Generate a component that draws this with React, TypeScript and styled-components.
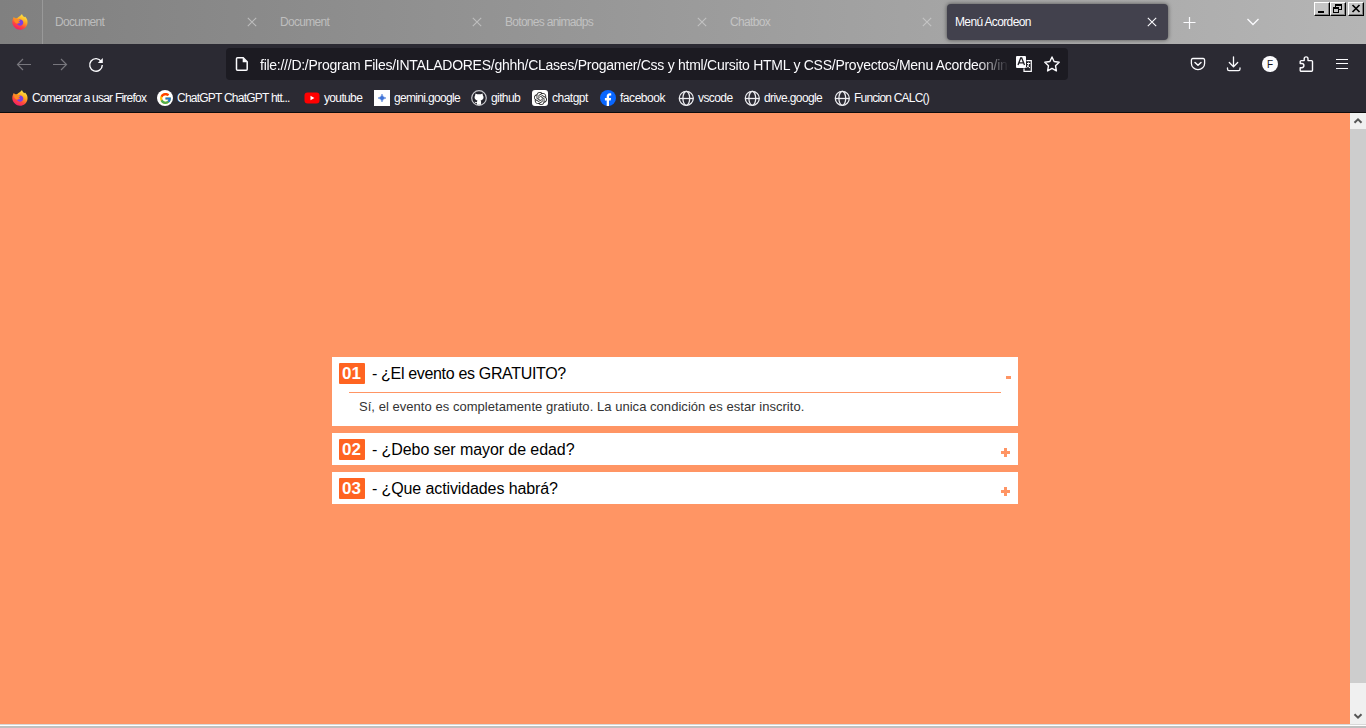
import React from "react";
import styled, { createGlobalStyle } from "styled-components";
import { SiOpenai } from "react-icons/si";
import { FcGoogle } from "react-icons/fc";
import { FaGithub } from "react-icons/fa";

const GlobalStyle = createGlobalStyle`
  * { box-sizing: border-box; }
  body { margin: 0; overflow: hidden; font-family: "Liberation Sans", Arial, sans-serif; }
`;

const Window = styled.div`
  display: flex;
  flex-direction: column;
  width: 1366px;
  height: 728px;
  background: #c0c0c0;
`;

const TitleBar = styled.div`
  position: relative;
  display: flex;
  height: 44px;
  background: linear-gradient(90deg, #808080, #b5b5b5);
`;

const HomeSlot = styled.div`
  width: 43px;
  height: 44px;
  padding: 14px 0 0 12px;
  border-right: 1px solid #999;
`;

const Tabs = styled.div`
  display: flex;
  padding: 4px 0 4px 4px;
`;

const Tab = styled.div<{ $active?: boolean; $color?: string }>`
  display: flex;
  align-items: center;
  justify-content: space-between;
  width: 221px;
  height: 36px;
  margin-right: 4px;
  padding: 0 11px 0 8px;
  border-radius: 4px;
  color: ${(p) => p.$color ?? "#fbfbfe"};
  background: ${(p) => (p.$active ? "#42414d" : "transparent")};
  box-shadow: ${(p) => (p.$active ? "0 0 4px rgba(0,0,0,.55)" : "none")};
`;

const Label = styled.span<{ $spacing: number }>`
  font-size: 12px;
  line-height: 16px;
  letter-spacing: ${(p) => p.$spacing}px;
  white-space: nowrap;
`;

const TabActions = styled.div`
  display: flex;
  gap: 48px;
  padding: 14px 0 0 9px;
`;

const WindowButtons = styled.div`
  position: absolute;
  top: 2px;
  right: 2px;
  display: flex;
`;

const WindowButton = styled.div<{ $gap?: boolean }>`
  width: 16px;
  height: 14px;
  margin-left: ${(p) => (p.$gap ? 2 : 0)}px;
  background: #c6c6c6;
  border: 1px solid;
  border-color: #fff #000 #000 #fff;
  box-shadow: inset -1px -1px #808080;
  svg { display: block; }
`;

const NavBar = styled.div`
  display: flex;
  height: 41px;
  padding-top: 4px;
  background: #2b2a33;
`;

const NavGroup = styled.div`
  display: flex;
  gap: 20px;
  width: 226px;
  padding: 9px 0 0 16px;
`;

const UrlBar = styled.div`
  display: flex;
  align-items: center;
  width: 842px;
  height: 32px;
  padding: 0 8px;
  border-radius: 4px;
  background: #1c1b22;
`;

const UrlText = styled.div`
  width: 749px;
  margin: 1px 7px 0 10px;
  overflow: hidden;
  color: #fbfbfe;
  font-size: 14px;
  line-height: 20px;
  letter-spacing: -0.26px;
  white-space: nowrap;
  mask-image: linear-gradient(to left, transparent, #000 32px);
`;

const UrlIcons = styled.div`
  display: flex;
  gap: 12px;
`;

const ToolGroup = styled.div`
  display: flex;
  gap: 20px;
  padding: 8px 0 0 122px;
`;

const Bookmarks = styled.div`
  display: flex;
  height: 28px;
  padding: 5px 0 0 12px;
  background: #2b2a33;
  border-bottom: 1px solid #0c0c0d;
`;

const Bookmark = styled.div<{ $width: number }>`
  display: flex;
  gap: 4px;
  width: ${(p) => p.$width}px;
  color: #fbfbfe;
`;

const Icon = styled.svg`
  display: block;
  flex: none;
`;

const Chip = styled.span<{ $radius: string; $dark?: boolean }>`
  display: flex;
  flex: none;
  align-items: center;
  justify-content: center;
  width: 16px;
  height: 16px;
  border-radius: ${(p) => p.$radius};
  border: ${(p) => (p.$dark ? "1px solid #c9c9cd" : "none")};
  background: ${(p) => (p.$dark ? "#fff" : "#fff")};
  color: #222;
`;

const Viewport = styled.div`
  display: flex;
  height: 611px;
`;

const Page = styled.main`
  flex: 1;
  padding: 244px 332px 0;
  background: #ff9564;
`;

const Scrollbar = styled.div`
  display: flex;
  flex-direction: column;
  justify-content: space-between;
  width: 16px;
  background: #f0f0f0;
`;

const Thumb = styled.div`
  height: 554px;
  margin-bottom: 25px;
  background: #cdcdcd;
`;

const BottomEdge = styled.div`
  height: 2px;
  background: #fff;
  border-top: 1px solid #d8d8d8;
`;

const Accordion = styled.div`
  display: flex;
  flex-direction: column;
  gap: 7px;
  width: 686px;
`;

const Item = styled.section`
  background: #fff;
`;

const ItemHeader = styled.div<{ $open?: boolean }>`
  display: flex;
  height: 32px;
  padding: 6px ${(p) => (p.$open ? 7 : 8)}px 0 7px;
`;

const Badge = styled.span`
  width: 26px;
  height: 21px;
  margin-right: 7px;
  padding-left: 3px;
  border-radius: 1px;
  background: #ff6421;
  color: #fff;
  font-size: 17px;
  font-weight: bold;
  line-height: 21px;
`;

const Question = styled.span<{ $spacing: number }>`
  flex: 1;
  color: #000;
  font-size: 16px;
  line-height: 21px;
  letter-spacing: ${(p) => p.$spacing}px;
`;

const Answer = styled.p`
  height: 34px;
  margin: 3px 17px 0;
  padding: 5px 10px 0;
  border-top: 1px solid #ff9564;
  color: #333;
  font-size: 13px;
  line-height: 18px;
  letter-spacing: 0.04px;
`;

const Sign = styled.svg`
  display: block;
  margin-top: 9px;
`;

const Firefox = () => (
  <Icon width="16" height="16" viewBox="0 0 16 16">
    <defs>
      <linearGradient id="flame" x1="0.8" y1="0" x2="0.3" y2="1">
        <stop offset="0" stopColor="#fff44f" />
        <stop offset="0.4" stopColor="#ffab1f" />
        <stop offset="0.7" stopColor="#ff4a3d" />
        <stop offset="1" stopColor="#f5156c" />
      </linearGradient>
    </defs>
    <path d="M1.8 3.1 3 4.300 5 4.200C7 2.400 8.500 2 10 0c.3 1.500 1.200 2.300 2.300 3.200L13 2.500c2 1.800 2.800 4 2.500 6.500C15 13 11.800 15.800 8 15.800S.6 12.600.3 8.600C.2 6.500.9 4.800 1.800 3.100Z" fill="url(#flame)" />
    <path d="M5 7.200C6 5.500 8 5.200 9.500 5.800c1.500.8 2 2.200 1.700 3.500-.4 1.500-1.600 2.400-3.100 2.400S5 10.700 4.900 9.300l2 .2 1.300-1.200z" fill="#7b3fe4" />
    <path d="M2 5.200c1.700-.7 3.400-.5 4.700.6l1.500.7-1.900 1.500-.8 1.700c-2.200-.5-3.500-2-3.500-4.500Z" fill="#ff8a22" />
  </Icon>
);

const Close = ({ color = "#fbfbfe" }: { color?: string }) => (
  <Icon width="10" height="10" viewBox="0 0 10 10" stroke={color} strokeWidth="1.1">
    <path d="M.8.800 9.200 9.200M9.200.800.8 9.200" />
  </Icon>
);

const Globe = () => (
  <Icon width="16" height="16" viewBox="0 0 16 16" fill="none" stroke="#ececf0" strokeWidth="1.300">
    <circle cx="8.300" cy="8.300" r="7" />
    <ellipse cx="8.300" cy="8.300" rx="3.400" ry="7" />
    <path d="M1.300 8.500h14" />
  </Icon>
);

const GitHub = () => (
  <Icon width="16" height="16" viewBox="0 0 16 16">
    <circle cx="8" cy="8" r="7.300" fill="#25242c" stroke="#c8c8cc" strokeWidth="1.200" />
    <path d="M4.500 3.500 6.300 4.300h3.400l1.800-.8.4 2c.7 1 .8 2.200.3 3.300-.4.9-1.300 1.400-2.600 1.600.4.400.5.900.5 1.500v2.800H6v-1.600c-1.200.3-1.900-.2-2.500-1.300.9-.1 1.500.7 2.500.5 0-.8.100-1.400.5-1.900-1.300-.2-2.200-.7-2.600-1.600-.5-1.100-.4-2.300.2-3.300z" fill="#fff" />
  </Icon>
);

const YouTube = () => (
  <Icon width="16" height="16" viewBox="0 0 16 16">
    <rect x="0.500" y="2.500" width="15" height="11" rx="3" fill="#f00" />
    <path d="M6.500 5.800v4.400L10.400 8z" fill="#fff" />
  </Icon>
);

const Gemini = () => (
  <Chip $radius="0">
    <Icon width="8" height="8" viewBox="0 0 8 8">
      <path d="M4 0Q4.500 3.500 8 4 4.500 4.500 4 8 3.500 4.500 0 4 3.500 3.500 4 0Z" fill="#3f73d8" stroke="#5b88dc" strokeWidth=".6" />
    </Icon>
  </Chip>
);

const Facebook = () => (
  <Icon width="16" height="16" viewBox="0 0 16 16">
    <circle cx="8" cy="8" r="8" fill="#0866ff" />
    <path d="M6.700 16v-5.500H4.900V8h1.800V6.700c0-2.300 1.100-3.500 3.100-3.500.5 0 1 .1 1.400.2v2.200h-1c-.9 0-1.200.5-1.200 1.300V8h2.100l-.4 2.500H9V16z" fill="#fff" />
  </Icon>
);

const bookmarks = [
  { name: "Comenzar a usar Firefox", icon: <Firefox />, width: 145, spacing: -0.78 },
  { name: "ChatGPT ChatGPT htt...", icon: <Chip $radius="50%"><FcGoogle size={13} /></Chip>, width: 147, spacing: -0.77 },
  { name: "youtube", icon: <YouTube />, width: 70, spacing: -0.65 },
  { name: "gemini.google", icon: <Gemini />, width: 97, spacing: -0.67 },
  { name: "github", icon: <GitHub />, width: 61, spacing: -0.6 },
  { name: "chatgpt", icon: <Chip $radius="3px"><SiOpenai size={13} /></Chip>, width: 68, spacing: -0.5 },
  { name: "facebook", icon: <Facebook />, width: 78, spacing: -0.46 },
  { name: "vscode", icon: <Globe />, width: 66, spacing: -0.58 },
  { name: "drive.google", icon: <Globe />, width: 90, spacing: -0.6 },
  { name: "Funcion CALC()", icon: <Globe />, width: 100, spacing: -0.79 },
];

const tabs = [
  { name: "Document", spacing: -0.7, color: "#bcbcbc" },
  { name: "Document", spacing: -0.7, color: "#bebebe" },
  { name: "Botones animadps", spacing: -0.71, color: "#c1c1c1" },
  { name: "Chatbox", spacing: -0.67, color: "#c4c4c4" },
];

const Plus = () => (
  <Sign width="9" height="9" viewBox="0 0 9 9" fill="#ff9564">
    <path d="M3 0h3v3h3v3H6v3H3V6H0V3h3z" />
  </Sign>
);

const Minus = () => (
  <Sign width="5" height="9" viewBox="0 0 5 9" fill="#ff9564">
    <path d="M0 4h5v3H0z" />
  </Sign>
);

export default function App() {
  return (
    <Window>
      <GlobalStyle />
      <TitleBar>
        <HomeSlot><Firefox /></HomeSlot>
        <Tabs>
          {tabs.map((t, i) => (
            <Tab key={i} $color={t.color}>
              <Label $spacing={t.spacing}>{t.name}</Label>
              <Close color={t.color} />
            </Tab>
          ))}
          <Tab $active>
            <Label $spacing={-0.64}>Menú Acordeon</Label>
            <Close />
          </Tab>
        </Tabs>
        <TabActions>
          <Icon width="16" height="16" viewBox="0 0 16 16" stroke="#fbfbfe" strokeWidth="1.200"><path d="M8.500 3v12M2.500 8.500h12" /></Icon>
          <Icon width="16" height="16" viewBox="0 0 16 16" fill="none" stroke="#fbfbfe" strokeWidth="1.300"><path d="m2.500 5 5.500 5.500L13.500 5" /></Icon>
        </TabActions>
        <WindowButtons>
          <WindowButton><svg width="14" height="12"><path d="M3 8h6v2H3z" /></svg></WindowButton>
          <WindowButton>
            <svg width="14" height="12" fill="none" stroke="#000" shapeRendering="crispEdges">
              <path d="M4.500 4V1.500h6v5H8M4 2h7" /><path d="M2.500 4.500h5v5h-5zM2 5h6" />
            </svg>
          </WindowButton>
          <WindowButton $gap><svg width="14" height="12" stroke="#000" strokeWidth="1.700"><path d="m3.500 2 7 7m0-7-7 7" /></svg></WindowButton>
        </WindowButtons>
      </TitleBar>

      <NavBar>
        <NavGroup>
          <Icon width="16" height="16" viewBox="0 0 16 16" fill="none" stroke="#77767d" strokeWidth="1.200"><path d="M15 7.500H1.500M7 2 1.500 7.500 7 13" /></Icon>
          <Icon width="16" height="16" viewBox="0 0 16 16" fill="none" stroke="#77767d" strokeWidth="1.200"><path d="M1 7.500h13.500M9 2l5.500 5.500L9 13" /></Icon>
          <Icon width="16" height="16" viewBox="0 0 16 16" fill="none" stroke="#fbfbfe" strokeWidth="1.400"><path d="M13.300 4.500A6.300 6.300 0 1 0 14.300 8" /><path d="M14.800 1v5H9.800z" fill="#fbfbfe" stroke="none" /></Icon>
        </NavGroup>
        <UrlBar>
          <Icon width="16" height="16" viewBox="0 0 16 16" fill="none" stroke="#fbfbfe" strokeWidth="1.500"><path d="M3.500 1.800h5.700l4 4v7.400a1 1 0 0 1-1 1H3.500a1 1 0 0 1-1-1V2.800a1 1 0 0 1 1-1Z" /><path d="M8.700 1.500v4.800h4.800" fill="#fbfbfe" stroke="none" /></Icon>
          <UrlText>file:///D:/Program Files/INTALADORES/ghhh/CLases/Progamer/Css y html/Cursito HTML y CSS/Proyectos/Menu Acordeon/ind</UrlText>
          <UrlIcons>
            <Icon width="16" height="16" viewBox="0 0 16 16">
              <rect width="10" height="12" rx="1" fill="#fbfbfe" />
              <path d="m2 9 2.700-7h1L8.500 9M3 6.800h4.500" fill="none" stroke="#1c1b22" strokeWidth="1.300" />
              <path d="M10.500 4.700h4.800v10.600H8V12.500" fill="none" stroke="#fbfbfe" strokeWidth="1.200" />
              <path d="M11 7.500h3.200M12.500 6.500v1.300c0 1.500-.8 3-2 4M11 9.500l3 2.500" fill="none" stroke="#fbfbfe" strokeWidth="1" />
            </Icon>
            <Icon width="16" height="16" viewBox="0 0 16 16" fill="none" stroke="#fbfbfe" strokeWidth="1.400" strokeLinejoin="round"><path d="m8 1 2.100 4.500 5.100.7-3.700 3.500.9 5.200L8 12.400l-4.400 2.500.9-5.200L.8 6.200l5.100-.7z" /></Icon>
          </UrlIcons>
        </UrlBar>
        <ToolGroup>
          <Icon width="16" height="16" viewBox="0 0 16 16" fill="none" stroke="#fbfbfe" strokeWidth="1.300" strokeLinecap="round" strokeLinejoin="round"><path d="M2.700 2.500h10.600a1.500 1.500 0 0 1 1.300 1.500v3.500a6.600 6.100 0 0 1-13.200 0V4a1.500 1.500 0 0 1 1.300-1.500Z" /><path d="M5 6.500 8 9.300l3-2.800" strokeWidth="1.500" /></Icon>
          <Icon width="16" height="16" viewBox="0 0 16 16" fill="none" stroke="#fbfbfe" strokeWidth="1.300" strokeLinecap="round" strokeLinejoin="round"><path d="M7.500.800v9.700M3.300 6.500l4.200 4.200 4.200-4.200M1.500 12v1a1.600 1.600 0 0 0 1.600 1.600h9.300a1.600 1.600 0 0 0 1.600-1.600v-1" /></Icon>
          <Icon width="16" height="16" viewBox="0 0 16 16"><circle cx="8" cy="8" r="8" fill="#fbfbfe" /><text x="8" y="11.500" textAnchor="middle" fontSize="10" fill="#15141a">F</text></Icon>
          <Icon width="16" height="16" viewBox="0 0 16 16" fill="none" stroke="#fbfbfe" strokeWidth="1.400" strokeLinejoin="round"><path d="M2.200 7.500V5.600a1 1 0 0 1 1-1h3V2.800a1.900 1.900 0 0 1 3.800 0v1.800h3.500a1 1 0 0 1 1 1v8.600a1 1 0 0 1-1 1H3.200a1 1 0 0 1-1-1v-2.500h1.600a1.900 1.900 0 0 0 0-4.200H2.200Z" /></Icon>
          <Icon width="16" height="16" viewBox="0 0 16 16" stroke="#fbfbfe" strokeWidth="1.200"><path d="M2 3.500h12M2 7.500h12M2 12.500h12" /></Icon>
        </ToolGroup>
      </NavBar>
      <Bookmarks>
        {bookmarks.map((b) => (
          <Bookmark key={b.name} $width={b.width}>{b.icon}<Label $spacing={b.spacing}>{b.name}</Label></Bookmark>
        ))}
      </Bookmarks>

      <Viewport>
        <Page>
          <Accordion>
            <Item>
              <ItemHeader $open><Badge>01</Badge><Question $spacing={-0.33}>- ¿El evento es GRATUITO?</Question><Minus /></ItemHeader>
              <Answer>Sí, el evento es completamente gratiuto. La unica condición es estar inscrito.</Answer>
            </Item>
            <Item>
              <ItemHeader><Badge>02</Badge><Question $spacing={-0.08}>- ¿Debo ser mayor de edad?</Question><Plus /></ItemHeader>
            </Item>
            <Item>
              <ItemHeader><Badge>03</Badge><Question $spacing={-0.11}>- ¿Que actividades habrá?</Question><Plus /></ItemHeader>
            </Item>
          </Accordion>
        </Page>
        <Scrollbar>
          <Icon width="16" height="16" viewBox="0 0 16 16" fill="none" stroke="#555" strokeWidth="2"><path d="m4.500 9.800 3.500-3.500 3.500 3.500" /></Icon>
          <Thumb />
          <Icon width="16" height="16" viewBox="0 0 16 16" fill="none" stroke="#555" strokeWidth="2"><path d="m4.500 6.200 3.500 3.500 3.500-3.500" /></Icon>
        </Scrollbar>
      </Viewport>
      <BottomEdge />
    </Window>
  );
}
